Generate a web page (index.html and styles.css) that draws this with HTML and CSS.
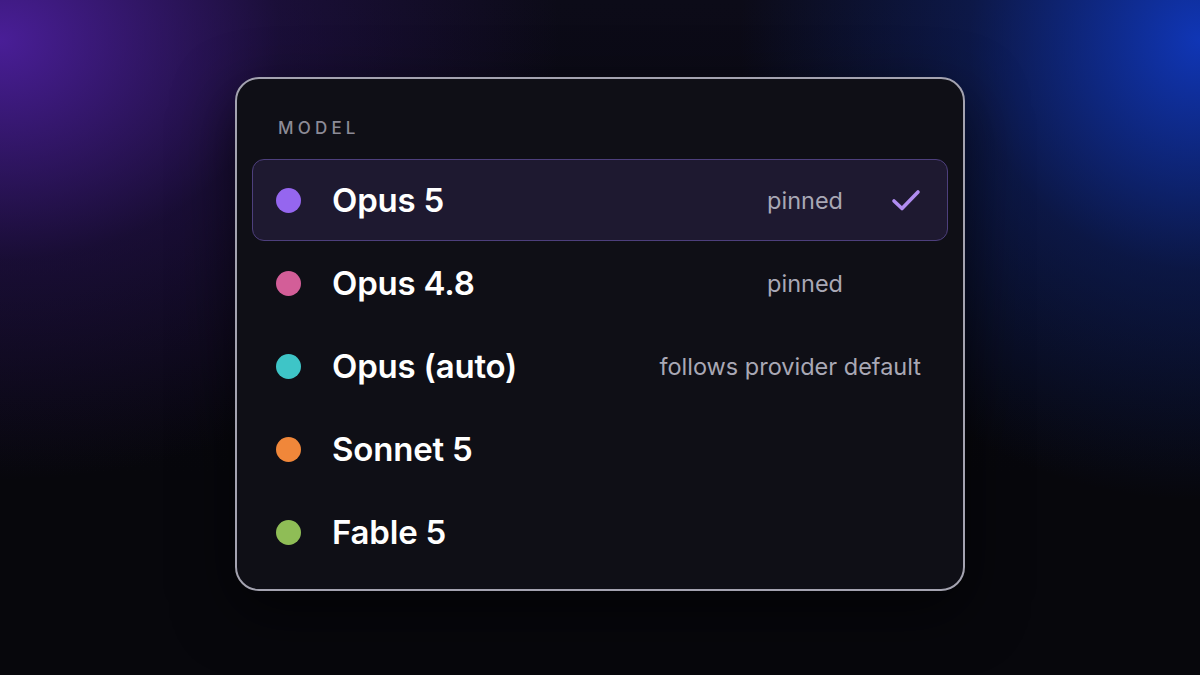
FILE: index.html
```html
<!DOCTYPE html>
<html lang="en">
<head>
    <meta charset="UTF-8">
    <meta name="viewport" content="width=device-width, initial-scale=1.0">
    <title>model picker</title>
    <link rel="stylesheet" href="styles.css">
</head>
<body>

  <div class="card">
    <p class="label">MODEL</p>

    <!-- model list -->
    <div class="list">
      <div class="row selected">
        <span class="dot purple"></span>
        <span class="name">Opus 5</span>
        <span class="meta">pinned</span>
        <span class="check">
          <svg width="30" height="24" viewBox="0 0 30 24">
            <path d="M3 13 L11 20.5 L27 4" fill="none" stroke="#b08cf0" stroke-width="3.6" stroke-linecap="round" stroke-linejoin="round"/>
          </svg>
        </span>
      </div>

      <div class="row">
        <span class="dot pink"></span>
        <span class="name">Opus 4.8</span>
        <span class="meta">pinned</span>
        <span class="check"></span>
      </div>

      <div class="row">
        <span class="dot teal"></span>
        <span class="name">Opus (auto)</span>
        <span class="meta">follows provider default</span>
      </div>

      <div class="row">
        <span class="dot orange"></span>
        <span class="name">Sonnet 5</span>
      </div>

      <div class="row">
        <span class="dot green"></span>
        <span class="name">Fable 5</span>
      </div>
    </div>
  </div>

</body>
</html>
```

FILE: styles.css
```css
html, body {
  margin: 0;
  height: 100%;
}

body {
  font-family: Inter, "Noto Sans", sans-serif;
  background-color: #07070c;
  background-image:
    radial-gradient(ellipse 560px 440px at 0px 40px, rgba(80, 32, 165, 0.9), rgba(48, 20, 105, 0.4) 50%, rgba(7, 7, 12, 0) 100%),
    radial-gradient(ellipse 460px 460px at 1200px 40px, rgba(16, 56, 190, 0.95), rgba(14, 40, 130, 0.45) 50%, rgba(7, 7, 12, 0) 100%),
    linear-gradient(180deg, #0c0b18 0%, #07070c 70%);
  display: flex;
  justify-content: center;
  align-items: flex-start;
  padding-top: 77px;
  box-sizing: border-box;
}

.card {
  width: 730px;
  box-sizing: border-box;
  border: 2px solid #a4a3b0;
  border-radius: 24px;
  background-color: #0f0f16;
  padding: 15px 15px 16px 15px;
  box-shadow: 0 20px 60px rgba(0, 0, 0, 0.6);
}

.label {
  margin: 0;
  padding: 24px 26px 0 26px;
  margin-bottom: 21px;
  line-height: 20px;
  font-size: 17px;
  font-weight: 500;
  letter-spacing: 4.2px;
  color: #8c8b97;
}

.list {
  display: flex;
  flex-direction: column;
  gap: 1px;
}

.row {
  height: 82px;
  box-sizing: border-box;
  display: flex;
  align-items: center;
  padding: 0 26px 0 23px;
  border: 1px solid transparent;
  border-radius: 12px;
}

.row.selected {
  background-color: #1e1930;
  border-color: #4d3f7c;
}

.dot {
  width: 25px;
  height: 25px;
  border-radius: 50%;
  flex-shrink: 0;
}

.purple { background-color: #9566ef; }
.pink   { background-color: #d35e98; }
.teal   { background-color: #3ec5c7; }
.orange { background-color: #f0873a; }
.green  { background-color: #8fbd56; }

.name {
  margin-left: 31px;
  font-size: 33px;
  font-weight: 600;
  color: #ffffff;
  letter-spacing: -0.2px;
  flex: 1;
}

.meta {
  font-size: 23.5px;
  color: #a9a8b5;
}

.check {
  width: 30px;
  margin-left: 48px;
  display: flex;
  align-items: center;
  justify-content: flex-end;
}
```
